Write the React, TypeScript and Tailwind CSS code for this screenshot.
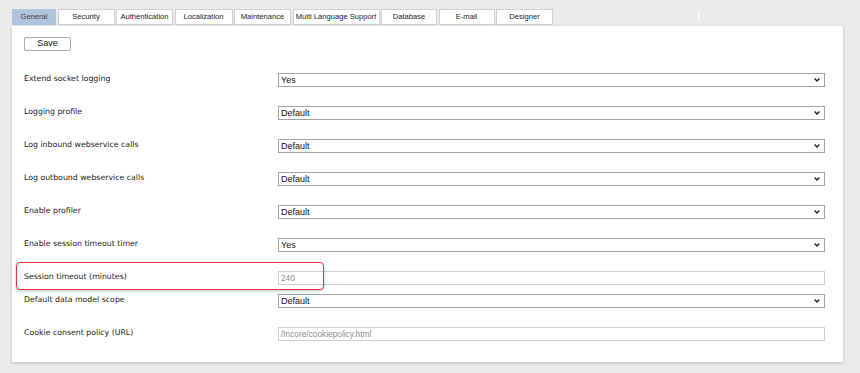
import React from 'react';

const tabs = [
  { label: 'General', w: 'w-[44px]', active: true },
  { label: 'Security', w: 'w-[57px]' },
  { label: 'Authentication', w: 'w-[57px]' },
  { label: 'Localization', w: 'w-[58px]' },
  { label: 'Maintenance', w: 'w-[57px]' },
  { label: 'Multi Language Support', w: 'w-[87px]' },
  { label: 'Database', w: 'w-[56px]' },
  { label: 'E-mail', w: 'w-[56px]' },
  { label: 'Designer', w: 'w-[57px]' },
];

type Row = { label: string; kind: 'select' | 'input'; value: string; gap: string };

const rows: Row[] = [
  { label: 'Extend socket logging', kind: 'select', value: 'Yes', gap: 'mt-[22px]' },
  { label: 'Logging profile', kind: 'select', value: 'Default', gap: 'mt-[19px]' },
  { label: 'Log inbound webservice calls', kind: 'select', value: 'Default', gap: 'mt-[19px]' },
  { label: 'Log outbound webservice calls', kind: 'select', value: 'Default', gap: 'mt-[19px]' },
  { label: 'Enable profiler', kind: 'select', value: 'Default', gap: 'mt-[19px]' },
  { label: 'Enable session timeout timer', kind: 'select', value: 'Yes', gap: 'mt-[19px]' },
  { label: 'Session timeout (minutes)', kind: 'input', value: '240', gap: 'mt-[19px]' },
  { label: 'Default data model scope', kind: 'select', value: 'Default', gap: 'mt-[9px]' },
  { label: 'Cookie consent policy (URL)', kind: 'input', value: '/Incore/cookiepolicy.html', gap: 'mt-[19px]' },
];

function Control({ row }: { row: Row }) {
  if (row.kind === 'select') {
    return (
      <div className="flex h-[14px] w-[547px] items-center justify-between border border-[#a3a3a3] bg-white pl-[2px] pr-[4px] font-['Liberation_Sans',Arial,sans-serif] text-[9px] leading-none text-[#111]">
        <span>{row.value}</span>
        <svg width="6" height="4" viewBox="0 0 6 4">
          <path d="M0.6 0.6 L3 3 L5.4 0.6" fill="none" stroke="#222" strokeWidth="1.4" />
        </svg>
      </div>
    );
  }
  return (
    <div className="flex h-[14px] w-[547px] items-center border border-[#cfcfcf] bg-white pl-[2px] font-['Liberation_Sans',Arial,sans-serif] text-[8.3px] leading-none text-[#8c8c8c]">
      {row.value}
    </div>
  );
}

export default function App() {
  return (
    <div className="h-[373px] w-[860px] overflow-hidden bg-[#ebebeb] pl-[12px] pt-[9px]">
      <div className="flex h-[17px] items-start">
        {tabs.map((t, i) => (
          <div
            key={t.label}
            className={`${t.w} ${i > 0 ? 'ml-[1.5px]' : ''} flex h-[16px] items-center justify-center border font-['Liberation_Sans',Arial,sans-serif] text-[7.6px] ${
              t.active ? 'border-[#b0c4de] bg-[#b0c4de] text-[#444]' : 'border-[#d0d0d0] bg-white text-[#222]'
            }`}
          >
            {t.label}
          </div>
        ))}
        <div className="ml-[145px] mt-[2px] h-[10px] w-px bg-white" />
      </div>

      <div className="relative h-[336px] w-[831px] bg-white pl-[12px] pt-[11px] shadow-[0_1px_3px_rgba(0,0,0,0.22)]">
        <button className="flex h-[14px] w-[47px] items-center justify-center rounded-[2px] border border-[#a8a8a8] bg-white font-['Liberation_Sans',Arial,sans-serif] text-[9px] text-[#111]">
          Save
        </button>

        {rows.map((r) => (
          <div key={r.label} className={`${r.gap} flex h-[14px] items-start`}>
            <div className="w-[254px] font-['DejaVu_Sans',Verdana,sans-serif] text-[7.8px] leading-[12px] text-[#222]">
              {r.label}
            </div>
            <Control row={r} />
          </div>
        ))}

        <div className="absolute left-[4px] top-[236px] h-[28px] w-[308px] rounded-[4px] border-[1.5px] border-[#e2343a] shadow-[0_1px_3px_rgba(0,0,0,0.25)]" />
      </div>
    </div>
  );
}
